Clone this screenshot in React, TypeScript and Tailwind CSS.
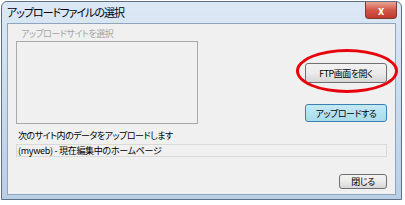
import React from "react";

const font = { fontFamily: '"Noto Sans CJK JP", "Noto Sans", sans-serif' };

function WinButton({
  label,
  className,
}: {
  label: string;
  className: string;
}) {
  return (
    <button
      type="button"
      className={`flex items-center justify-center rounded-[3px] border text-[9px] leading-none tracking-[-0.5px] text-black ${className}`}
    >
      {label}
    </button>
  );
}

export default function App() {
  return (
    <div
      className="h-[205px] w-[405px] bg-white pl-[1px] pt-[1px] [font-feature-settings:'palt']"
      style={font}
    >
      <div className="flex h-[199px] w-[401px] flex-col rounded-t-[6px] border border-[#5d6f84] bg-gradient-to-b from-[#dce8f5] via-[#c9dbee] to-[#b9cfe6]">
        {/* title bar */}
        <div className="flex h-[21px] items-start justify-between pl-[5px] pr-[4px]">
          <span className="pt-[4px] text-[11px] leading-[13px] tracking-[-1px] text-black">アップロードファイルの選択</span>
          <div className="flex h-[17px] w-[32px] items-center justify-center rounded-b-[4px] border border-t-0 border-[#7a3a30] bg-gradient-to-b from-[#e8a595] via-[#d2574a] to-[#c0392b] text-[11px] font-bold leading-none text-white">
            x
          </div>
        </div>

        {/* client area */}
        <div className="relative mx-[5px] h-[172px] border border-[#8fa5bd] bg-[#f0f0f0] px-[8px]">
          <div className="pl-[5px] pt-[4px] text-[9px] leading-[12px] tracking-[-0.5px] text-[#a5a5a5]">アップロードサイトを選択</div>

          <div className="mt-[1px] flex items-start">
            <div className="h-[83px] w-[182px] border border-[#a9a9a9] bg-[#f0f0f0]" />
            <div className="ml-auto flex flex-col pt-[22px]">
              <WinButton
                label="FTP画面を開く"
                className="h-[20px] w-[82px] border-[#707070] bg-gradient-to-b from-[#f2f2f2] via-[#ebebeb] to-[#d6d6d6]"
              />
              <WinButton
                label="アップロードする"
                className="mt-[21px] h-[18px] w-[82px] border-[#3c7fb1] bg-gradient-to-b from-[#c4e9f4] to-[#a8dcec]"
              />
            </div>
          </div>

          <div className="mt-[6px] pl-[2px] text-[9px] leading-[12px] tracking-[-0.5px] text-black">次のサイト内のデータをアップロードします</div>
          <div className="mt-[2px] flex h-[13px] items-center border border-[#d9d9d9] bg-[#f0f0f0] pl-[1px] text-[9px] leading-none tracking-[-0.3px] text-black">
            (myweb) - 現在編集中のホームページ
          </div>

          <div className="mt-[17px] flex justify-end">
            <WinButton
              label="閉じる"
              className="h-[15px] w-[48px] border-[#707070] bg-gradient-to-b from-[#f2f2f2] via-[#ebebeb] to-[#d6d6d6]"
            />
          </div>

          {/* red annotation ellipse */}
          <div className="pointer-events-none absolute left-[288px] top-[25px] h-[44px] w-[102px] rounded-[50%] border-[3px] border-[#e8000b]" />
        </div>
      </div>
    </div>
  );
}
